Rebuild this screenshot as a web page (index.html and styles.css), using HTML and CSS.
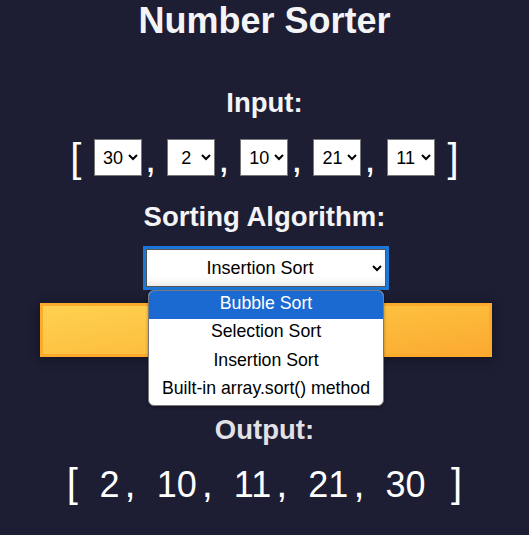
FILE: index.html
```html
<!DOCTYPE html>
<html lang="en">
<head>
<meta charset="utf-8">
<title>Number Sorter</title>
<link rel="stylesheet" href="styles.css">
</head>
<body>
<main class="app">
  <h1 class="title">Number Sorter</h1>

  <h2 class="heading heading--input">Input:</h2>
  <div class="array array--input">
    <span class="bracket bracket--open">[</span>
    <select class="num"><option>2</option><option>10</option><option>11</option><option>21</option><option selected>30</option></select><span class="comma">,</span>
    <select class="num"><option selected>2</option><option>10</option><option>11</option><option>21</option><option>30</option></select><span class="comma">,</span>
    <select class="num"><option>2</option><option selected>10</option><option>11</option><option>21</option><option>30</option></select><span class="comma">,</span>
    <select class="num"><option>2</option><option>10</option><option>11</option><option selected>21</option><option>30</option></select><span class="comma">,</span>
    <select class="num"><option>2</option><option>10</option><option selected>11</option><option>21</option><option>30</option></select>
    <span class="bracket bracket--close">]</span>
  </div>

  <h2 class="heading heading--algo">Sorting Algorithm:</h2>
  <div class="algo">
    <select class="algo-select">
      <option>Bubble Sort</option>
      <option>Selection Sort</option>
      <option selected>Insertion Sort</option>
      <option>Built-in array.sort() method</option>
    </select>
    <ul class="algo-menu">
      <li class="algo-option algo-option--active">Bubble Sort</li>
      <li class="algo-option">Selection Sort</li>
      <li class="algo-option">Insertion Sort</li>
      <li class="algo-option">Built-in array.sort() method</li>
    </ul>
  </div>

  <button class="sort-btn" type="button" aria-label="Sort"></button>

  <h2 class="heading heading--output">Output:</h2>
  <div class="array array--output">
    <span class="out-bracket out-bracket--open">[</span>
    <span class="out-num">2</span><span class="out-comma">,</span>
    <span class="out-num">10</span><span class="out-comma">,</span>
    <span class="out-num">11</span><span class="out-comma">,</span>
    <span class="out-num">21</span><span class="out-comma">,</span>
    <span class="out-num">30</span>
    <span class="out-bracket out-bracket--close">]</span>
  </div>
</main>
</body>
</html>
```

FILE: styles.css
```css
* {
  box-sizing: border-box;
}

html,
body {
  margin: 0;
  padding: 0;
  background: #1d1d33;
}

body {
  font-family: "Liberation Sans", Arial, sans-serif;
  color: #f4f4f6;
}

.app {
  padding-top: 1px;
  min-height: 535px;
}

.title {
  margin: 0;
  font-size: 36px;
  line-height: 40px;
  font-weight: 700;
  text-align: center;
  color: #f4f4f6;
}

.heading {
  margin: 0;
  font-size: 27.5px;
  line-height: 32px;
  font-weight: 700;
  text-align: center;
}

.heading--input {
  margin-top: 46px;
  color: #f4f4f6;
}

.heading--algo {
  margin-top: 25px;
  color: #f4f4f6;
}

.heading--output {
  margin-top: 57px;
  color: #e2e2e6;
}

.array {
  display: flex;
  justify-content: center;
}

.array--input {
  margin-top: 20px;
  height: 37px;
  align-items: center;
}

.bracket {
  font-size: 40px;
  line-height: 34px;
  color: #ffffff;
}

.bracket--open {
  margin-right: 12.7px;
}

.bracket--close {
  margin-left: 13px;
}

.comma {
  font-size: 40px;
  line-height: 34px;
  margin-left: 3px;
  margin-right: 11px;
  color: #ffffff;
}

.num {
  width: 48px;
  height: 37px;
  margin: 0;
  padding: 0 2px 0 4px;
  font-family: "Liberation Sans", Arial, sans-serif;
  font-size: 18px;
  color: #000;
  background-color: #fff;
  border: 1px solid #767676;
  border-radius: 0;
  text-align-last: center;
}

.algo {
  position: relative;
  margin-top: 16px;
  margin-left: 146px;
  width: 240px;
  height: 38px;
}

.algo-select {
  display: block;
  width: 240px;
  height: 38px;
  margin: 0;
  padding: 0 6px;
  font-family: "Liberation Sans", Arial, sans-serif;
  font-size: 18px;
  color: #000;
  background-color: #fff;
  border: 1px solid #555;
  border-radius: 0;
  outline: 3.5px solid #1c78d8;
  outline-offset: 0;
  text-align-last: center;
  box-shadow: inset 0 -6px 8px -4px rgba(0, 0, 0, 0.12);
}

.algo-menu {
  position: absolute;
  z-index: 10;
  top: 40.5px;
  left: 2px;
  width: 236px;
  margin: 0;
  padding: 0;
  list-style: none;
  background: #fff;
  border: 1px solid #7b7b7b;
  border-radius: 6px;
  overflow: hidden;
  box-shadow: 0 1px 3px rgba(0, 0, 0, 0.35);
}

.algo-option {
  height: 28.5px;
  line-height: 25px;
  padding-bottom: 3.5px;
  font-size: 17.7px;
  text-align: center;
  color: #000;
  white-space: nowrap;
}

.algo-option--active {
  background: #1b6ad2;
  color: #fff;
}

.sort-btn {
  display: block;
  margin: 16px 0 0 40px;
  width: 452px;
  height: 54px;
  padding: 0;
  border: 3px solid #fbaa2c;
  background: linear-gradient(170deg, #ffd150 0%, #fdbd3d 55%, #fbaa30 100%);
  box-shadow: 0 2px 10px rgba(0, 0, 0, 0.35);
}

.array--output {
  margin-top: 15px;
  align-items: baseline;
  line-height: 44px;
  color: #ffffff;
}

.out-num {
  font-size: 36px;
}

.out-comma {
  font-size: 40px;
  margin-left: 5px;
  margin-right: 21px;
}

.out-bracket {
  font-size: 40px;
}

.out-bracket--open {
  margin-right: 21.6px;
}

.out-bracket--close {
  margin-left: 25.5px;
}
```
